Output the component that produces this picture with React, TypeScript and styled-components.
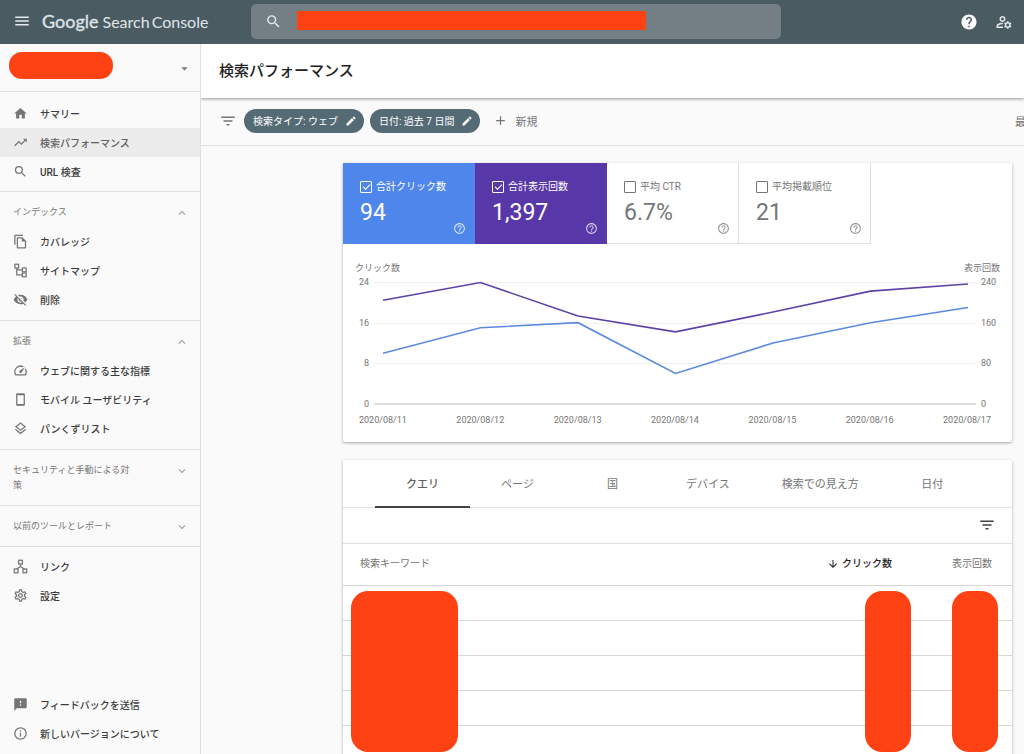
import React from 'react';
import styled, { createGlobalStyle, css } from 'styled-components';
import {
  MdAdd,
  MdArrowDownward,
  MdArrowDropDown,
  MdEdit,
  MdExpandLess,
  MdExpandMore,
  MdFeedback,
  MdFilterList,
  MdHelp,
  MdHelpOutline,
  MdHome,
  MdMenu,
  MdOutlineFileCopy,
  MdOutlineInfo,
  MdOutlineLayers,
  MdOutlineManageAccounts,
  MdOutlineSettings,
  MdOutlineSpeed,
  MdSearch,
  MdTrendingUp,
  MdVisibilityOff,
} from 'react-icons/md';

const color = {
  header: '#4b5b62',
  search: '#737f85',
  chip: '#546b76',
  page: '#fafafa',
  line: '#e0e0e0',
  text: '#212121',
  nav: '#3c3c3c',
  muted: '#757575',
  redact: '#ff4213',
  clicks: '#4f86ec',
  impressions: '#5838a8',
};

const GlobalStyle = createGlobalStyle`
  *, *::before, *::after { box-sizing: border-box; }
  body {
    margin: 0;
    background: ${color.page};
    color: ${color.text};
    font-family: Roboto, "Noto Sans CJK JP", sans-serif;
    font-size: 10px;
  }
  button, input { font: inherit; color: inherit; }
  button { border: 0; padding: 0; background: none; cursor: pointer; }
  a { color: inherit; text-decoration: none; }
  svg { display: block; flex: none; }
`;

const Shell = styled.div`
  display: flex;
  flex-direction: column;
  height: 100vh;
  overflow: hidden;
`;

/* ---------- header ---------- */

const Header = styled.header`
  display: flex;
  align-items: center;
  flex: none;
  height: 44px;
  padding-right: 11px;
  background: ${color.header};
  color: #e4e9eb;
`;

const Brand = styled.div`
  display: flex;
  align-items: center;
  flex: none;
  gap: 11px;
  width: 251px;
  padding: 0 0 2px 13px;
`;

const Logo = styled.a`
  display: flex;
  align-items: baseline;
  gap: 4px;
  font-family: Lato, sans-serif;
  font-size: 16px;
  line-height: 24px;
  color: #dfe5e8;
`;

const LogoName = styled.span`
  font-size: 18px;
  -webkit-text-stroke: 0.3px currentColor;
`;

const LogoProduct = styled.span`
  display: flex;
  gap: 2px;
`;

const SearchBox = styled.label`
  position: relative;
  display: flex;
  align-items: center;
  flex: 0 1 530px;
  gap: 15px;
  height: 35px;
  margin-bottom: 2px;
  padding: 0 14px;
  border-radius: 5px;
  background: ${color.search};
`;

const SearchInput = styled.input`
  flex: 1;
  min-width: 0;
  height: 24px;
  border: 0;
  outline: 0;
  background: transparent;
  font-size: 12px;
`;

const SearchCover = styled.span`
  position: absolute;
  top: 7px;
  left: 46px;
  width: 349px;
  height: 19px;
  background: ${color.redact};
`;

const HeaderActions = styled.div`
  display: flex;
  align-items: center;
  gap: 17px;
  margin-left: auto;
  padding-bottom: 1px;
`;

/* ---------- sidebar ---------- */

const Body = styled.div`
  display: flex;
  flex: 1;
  min-height: 0;
`;

const Sidebar = styled.nav`
  display: flex;
  flex-direction: column;
  flex: none;
  width: 201px;
  border-right: 1px solid ${color.line};
`;

const PropertyPicker = styled.button`
  display: flex;
  align-items: center;
  justify-content: space-between;
  flex: none;
  height: 48px;
  padding: 0 8px 4px 9px;
  border-bottom: 1px solid ${color.line};
  color: ${color.muted};

  svg { margin-top: 5px; }
`;

const PropertyCover = styled.span`
  width: 104px;
  height: 27px;
  border-radius: 13px;
  background: ${color.redact};
`;

const Section = styled.section<{ $last?: boolean; $open?: boolean }>`
  padding: 5px 0 ${(p) => (p.$open ? 6 : 5)}px;
  border-bottom: ${(p) => (p.$last ? 0 : 1)}px solid ${color.line};
`;

const SectionHead = styled.button`
  display: flex;
  align-items: flex-start;
  justify-content: space-between;
  width: 100%;
  padding: 8px 11px 7px 13px;
  color: ${color.muted};
  font-size: 9px;
  line-height: 15px;
  text-align: left;

  svg { color: #9e9e9e; margin-top: 1px; }
`;

const SectionTitle = styled.span`
  width: 124px;
`;

const NavList = styled.ul<{ $top?: number }>`
  margin: 0;
  padding: ${(p) => p.$top ?? 0}px 0 0;
  list-style: none;
`;

const NavLink = styled.a<{ $active?: boolean }>`
  display: flex;
  align-items: center;
  gap: 12px;
  height: 29px;
  padding-left: 13px;
  color: ${(p) => (p.$active ? '#616161' : color.nav)};
  font-weight: 500;
  background: ${(p) => (p.$active ? '#ececec' : 'transparent')};

  svg { color: ${color.muted}; }
`;

const SidebarFoot = styled.div`
  margin-top: auto;
  padding-bottom: 6px;
`;

/* ---------- main ---------- */

const Main = styled.main`
  display: flex;
  flex-direction: column;
  flex: 1;
  min-width: 0;
  overflow: hidden;
`;

const TitleBar = styled.div`
  position: relative;
  display: flex;
  align-items: center;
  flex: none;
  height: 54px;
  padding-left: 18px;
  background: #fff;
  box-shadow: 0 1px 3px rgba(0, 0, 0, 0.4);
`;

const Title = styled.h1`
  margin: 0;
  font-size: 15px;
  line-height: 24px;
  font-weight: 500;
`;

const FilterBar = styled.div`
  display: flex;
  align-items: center;
  flex: none;
  gap: 6px;
  height: 48px;
  padding: 0 0 2px 17px;
  border-bottom: 1px solid ${color.line};
  overflow: hidden;
  color: ${color.muted};
`;

const IconButton = styled.button`
  display: flex;
  align-items: center;
  justify-content: center;
`;

const FilterToggle = styled(IconButton)`
  width: 20px;
`;

const Chip = styled.button`
  display: flex;
  align-items: center;
  justify-content: space-between;
  gap: 7px;
  height: 24px;
  padding: 0 7px 0 9px;
  border-radius: 12px;
  background: ${color.chip};
  color: #fff;
  white-space: nowrap;
`;

const NewFilter = styled.button`
  display: flex;
  align-items: center;
  gap: 7px;
  margin-left: 7px;
  font-size: 11px;
  white-space: nowrap;
`;

const Updated = styled.span`
  margin: 0 -2px 0 auto;
  font-size: 11px;
  white-space: nowrap;
`;

const Content = styled.div`
  flex: 1;
  min-height: 0;
  padding: 17px 12px 0 142px;
  overflow-y: auto;
  scrollbar-width: none;
`;

const Card = styled.section`
  margin-bottom: 18px;
  border-radius: 2px;
  background: #fff;
  box-shadow: 0 1px 3px rgba(0, 0, 0, 0.35);
`;

const Tiles = styled.div`
  display: flex;
`;

const Tile = styled.div<{ $fill?: string }>`
  width: 132px;
  height: 81px;
  padding: 16px 8px 0 17px;
  border: solid ${color.line};
  border-width: 0 1px 1px 0;
  color: ${color.muted};
  ${(p) =>
    p.$fill &&
    css`
      border-color: ${p.$fill};
      background: ${p.$fill};
      color: #fff;
    `}
`;

const TileLabel = styled.label`
  display: flex;
  align-items: center;
  gap: 4px;
  line-height: 16px;
  white-space: nowrap;
`;

const Check = styled.input`
  display: grid;
  place-items: center;
  appearance: none;
  width: 12px;
  height: 12px;
  margin: 0;
  border: 1px solid currentColor;
  border-radius: 1px;

  &:checked::after {
    content: '';
    width: 7px;
    height: 4px;
    margin-bottom: 2px;
    border: solid currentColor;
    border-width: 0 0 1px 1px;
    transform: rotate(-45deg);
  }
`;

const TileFoot = styled.div`
  display: flex;
  justify-content: space-between;
  height: 40px;
  padding-top: 5px;
`;

const TileValue = styled.span`
  font-size: 23px;
  line-height: 26px;
`;

const TileHelp = styled(IconButton)`
  align-self: flex-end;
  opacity: 0.75;
`;

/* ---------- chart ---------- */

const Chart = styled.figure`
  margin: 0;
  padding: 18px 12px 16px;
  color: ${color.muted};
  font-size: 9px;
  line-height: 12px;
`;

const AxisTitles = styled.div`
  display: flex;
  justify-content: space-between;
  margin-bottom: 2px;
`;

const PlotRow = styled.div`
  display: flex;
  gap: 5px;
`;

const Scale = styled.div<{ $align: 'left' | 'right' }>`
  display: flex;
  flex-direction: column;
  justify-content: space-between;
  width: ${(p) => (p.$align === 'right' ? 14 : 19)}px;
  height: 134px;
  text-align: ${(p) => p.$align};
`;

const Plot = styled.svg`
  flex: 1;
  min-width: 0;
  height: 122px;
  margin: 6px 0;
  overflow: visible;

  line, polyline { vector-effect: non-scaling-stroke; fill: none; }
`;

const Dates = styled.div`
  display: flex;
  justify-content: space-between;
  margin-top: 4px;
  padding: 0 9px 0 4px;
`;

/* ---------- table card ---------- */

const Tabs = styled.div`
  display: flex;
  height: 48px;
  padding-left: 32px;
  border-bottom: 1px solid ${color.line};
`;

const Tab = styled.button<{ $active?: boolean }>`
  min-width: 95px;
  height: 48px;
  padding: 0 26px;
  border-bottom: 2px solid ${(p) => (p.$active ? '#424242' : 'transparent')};
  color: ${(p) => (p.$active ? '#616161' : color.muted)};
  font-size: 11px;
  font-weight: ${(p) => (p.$active ? 500 : 400)};
  white-space: nowrap;
`;

const TableTools = styled.div`
  display: flex;
  align-items: center;
  justify-content: flex-end;
  height: 36px;
  padding: 0 16px 2px 0;
  border-bottom: 1px solid ${color.line};
  color: #424242;
`;

const TableWrap = styled.div`
  position: relative;
`;

const Table = styled.table`
  width: 100%;
  border-collapse: separate;
  border-spacing: 0;
  table-layout: fixed;
`;

const HeadCell = styled.th<{ $width?: number; $end?: boolean; $sorted?: boolean }>`
  width: ${(p) => (p.$width ? `${p.$width}px` : 'auto')};
  height: 42px;
  padding: 0 ${(p) => (p.$end ? 20 : 0)}px 2px ${(p) => (p.$end ? 0 : 17)}px;
  border-bottom: 1px solid #d6d6d6;
  color: ${(p) => (p.$sorted ? color.text : color.muted)};
  font-weight: ${(p) => (p.$sorted ? 500 : 400)};
  line-height: 14px;
  text-align: ${(p) => (p.$end ? 'right' : 'left')};
  white-space: nowrap;
`;

const SortButton = styled.button`
  display: flex;
  align-items: center;
  gap: 3px;
  margin-left: auto;
  font-weight: 500;
`;

const Cell = styled.td`
  height: 35px;
  padding: 0;
  border-bottom: 1px solid #d6d6d6;
`;

const Cover = styled.span<{ $left?: number; $right?: number; $width: number }>`
  position: absolute;
  top: 47px;
  ${(p) => (p.$left !== undefined ? `left: ${p.$left}px;` : `right: ${p.$right}px;`)}
  width: ${(p) => p.$width}px;
  height: 161px;
  border-radius: 17px;
  background: ${color.redact};
`;

/* ---------- drawn icons ---------- */

const Stroke = styled.svg.attrs({ viewBox: '0 0 24 24', width: 15, height: 15 })`
  fill: none;
  stroke: currentColor;
  stroke-width: 2;
`;

const SitemapIcon = () => (
  <Stroke>
    <rect x="3" y="2" width="6" height="6" />
    <rect x="15" y="8" width="6" height="6" />
    <rect x="15" y="16" width="6" height="6" />
    <path d="M6 8v11h9M6 11h9" />
  </Stroke>
);

const PhoneIcon = () => (
  <Stroke>
    <rect x="6" y="3" width="12" height="18" rx="1" />
    <path d="M6 4h12M6 20h12" />
  </Stroke>
);

const LinksIcon = () => (
  <Stroke>
    <rect x="9" y="2" width="6" height="6" />
    <rect x="2" y="16" width="6" height="6" />
    <rect x="16" y="16" width="6" height="6" />
    <path d="M12 8v5M12 12l-6 4M12 12l6 4" />
  </Stroke>
);

/* ---------- data ---------- */

const dates = ['11', '12', '13', '14', '15', '16', '17'].map((d) => `2020/08/${d}`);
const clicks = [10, 15, 16, 6, 12, 16, 19];
const impressions = [204, 239, 173, 142, 181, 222, 236];

const points = (values: number[], max: number) =>
  values.map((v, i) => `${9 + (i * 585) / 6},${122 - (v / max) * 122}`).join(' ');

type Item = { label: string; icon: React.ReactNode; active?: boolean };

const topItems: Item[] = [
  { label: 'サマリー', icon: <MdHome size={15} /> },
  { label: '検索パフォーマンス', icon: <MdTrendingUp size={15} />, active: true },
  { label: 'URL 検査', icon: <MdSearch size={15} /> },
];
const indexItems: Item[] = [
  { label: 'カバレッジ', icon: <MdOutlineFileCopy size={15} /> },
  { label: 'サイトマップ', icon: <SitemapIcon /> },
  { label: '削除', icon: <MdVisibilityOff size={15} /> },
];
const enhanceItems: Item[] = [
  { label: 'ウェブに関する主な指標', icon: <MdOutlineSpeed size={15} /> },
  { label: 'モバイル ユーザビリティ', icon: <PhoneIcon /> },
  { label: 'パンくずリスト', icon: <MdOutlineLayers size={15} /> },
];
const lowerItems: Item[] = [
  { label: 'リンク', icon: <LinksIcon /> },
  { label: '設定', icon: <MdOutlineSettings size={15} /> },
];
const footItems: Item[] = [
  { label: 'フィードバックを送信', icon: <MdFeedback size={15} /> },
  { label: '新しいバージョンについて', icon: <MdOutlineInfo size={15} /> },
];

const tiles = [
  { label: '合計クリック数', value: '94', fill: color.clicks },
  { label: '合計表示回数', value: '1,397', fill: color.impressions },
  { label: '平均 CTR', value: '6.7%' },
  { label: '平均掲載順位', value: '21' },
];

const tabs = ['クエリ', 'ページ', '国', 'デバイス', '検索での見え方', '日付'];

const Nav = ({ items, top }: { items: Item[]; top?: number }) => (
  <NavList $top={top}>
    {items.map((item) => (
      <li key={item.label}>
        <NavLink href="#" $active={item.active} aria-current={item.active ? 'page' : undefined}>
          {item.icon}
          {item.label}
        </NavLink>
      </li>
    ))}
  </NavList>
);

const NavSection = ({ title, items }: { title: string; items?: Item[] }) => (
  <Section $open={!!items}>
    <SectionHead aria-expanded={!!items}>
      <SectionTitle>{title}</SectionTitle>
      {items ? <MdExpandLess size={14} /> : <MdExpandMore size={14} />}
    </SectionHead>
    {items && <Nav items={items} />}
  </Section>
);

export default function App() {
  return (
    <Shell>
      <GlobalStyle />
      <Header>
        <Brand>
          <IconButton aria-label="メニュー">
            <MdMenu size={18} />
          </IconButton>
          <Logo href="#">
            <LogoName>Google</LogoName>
            <LogoProduct>
              <span>Search</span>
              <span>Console</span>
            </LogoProduct>
          </Logo>
        </Brand>
        <SearchBox>
          <MdSearch size={17} />
          <SearchInput type="search" aria-label="URL を検査" />
          <SearchCover />
        </SearchBox>
        <HeaderActions>
          <IconButton aria-label="ヘルプ">
            <MdHelp size={18} color="#fff" />
          </IconButton>
          <IconButton aria-label="ユーザー設定">
            <MdOutlineManageAccounts size={18} />
          </IconButton>
        </HeaderActions>
      </Header>

      <Body>
        <Sidebar>
          <PropertyPicker aria-label="プロパティを選択">
            <PropertyCover />
            <MdArrowDropDown size={15} />
          </PropertyPicker>
          <Section>
            <Nav items={topItems} top={2} />
          </Section>
          <NavSection title="インデックス" items={indexItems} />
          <NavSection title="拡張" items={enhanceItems} />
          <NavSection title="セキュリティと手動による対策" />
          <NavSection title="以前のツールとレポート" />
          <Section $last>
            <Nav items={lowerItems} />
          </Section>
          <SidebarFoot>
            <Nav items={footItems} />
          </SidebarFoot>
        </Sidebar>

        <Main>
          <TitleBar>
            <Title>検索パフォーマンス</Title>
          </TitleBar>
          <FilterBar>
            <FilterToggle aria-label="フィルタ">
              <MdFilterList size={18} />
            </FilterToggle>
            <Chip>
              検索タイプ: ウェブ
              <MdEdit size={12} />
            </Chip>
            <Chip>
              日付: 過去 7 日間
              <MdEdit size={12} />
            </Chip>
            <NewFilter>
              <MdAdd size={15} />
              新規
            </NewFilter>
            <Updated>最</Updated>
          </FilterBar>

          <Content>
            <Card>
              <Tiles>
                {tiles.map((t) => (
                  <Tile key={t.label} $fill={t.fill}>
                    <TileLabel>
                      <Check type="checkbox" defaultChecked={!!t.fill} />
                      {t.label}
                    </TileLabel>
                    <TileFoot>
                      <TileValue>{t.value}</TileValue>
                      <TileHelp aria-label={`${t.label}のヘルプ`}>
                        <MdHelpOutline size={13} />
                      </TileHelp>
                    </TileFoot>
                  </Tile>
                ))}
              </Tiles>
              <Chart>
                <AxisTitles>
                  <span>クリック数</span>
                  <span>表示回数</span>
                </AxisTitles>
                <PlotRow>
                  <Scale $align="right">
                    {[24, 16, 8, 0].map((n) => (
                      <span key={n}>{n}</span>
                    ))}
                  </Scale>
                  <Plot viewBox="0 0 602 122" preserveAspectRatio="none">
                    <g stroke="#efefef" shapeRendering="crispEdges">
                      <line x1="0" x2="602" y1="0" y2="0" />
                      <line x1="0" x2="602" y1="41" y2="41" />
                      <line x1="0" x2="602" y1="81" y2="81" />
                    </g>
                    <line x1="0" x2="602" y1="122" y2="122" stroke="#bdbdbd" />
                    <polyline points={points(clicks, 24)} stroke="#5c8ae0" strokeWidth="1.6" />
                    <polyline points={points(impressions, 240)} stroke="#5e42a6" strokeWidth="1.6" />
                  </Plot>
                  <Scale $align="left">
                    {[240, 160, 80, 0].map((n) => (
                      <span key={n}>{n}</span>
                    ))}
                  </Scale>
                </PlotRow>
                <Dates>
                  {dates.map((d) => (
                    <span key={d}>{d}</span>
                  ))}
                </Dates>
              </Chart>
            </Card>

            <Card>
              <Tabs role="tablist">
                {tabs.map((t, i) => (
                  <Tab key={t} role="tab" aria-selected={i === 0} $active={i === 0}>
                    {t}
                  </Tab>
                ))}
              </Tabs>
              <TableTools>
                <IconButton aria-label="行をフィルタ">
                  <MdFilterList size={18} />
                </IconButton>
              </TableTools>
              <TableWrap>
                <Table>
                  <thead>
                    <tr>
                      <HeadCell>検索キーワード</HeadCell>
                      <HeadCell $width={100} $end $sorted aria-sort="descending">
                        <SortButton>
                          <MdArrowDownward size={12} />
                          クリック数
                        </SortButton>
                      </HeadCell>
                      <HeadCell $width={100} $end>
                        表示回数
                      </HeadCell>
                    </tr>
                  </thead>
                  <tbody>
                    {[0, 1, 2, 3, 4, 5].map((row) => (
                      <tr key={row}>
                        <Cell />
                        <Cell />
                        <Cell />
                      </tr>
                    ))}
                  </tbody>
                </Table>
                <Cover $left={8} $width={107} />
                <Cover $right={101} $width={46} />
                <Cover $right={14} $width={46} />
              </TableWrap>
            </Card>
          </Content>
        </Main>
      </Body>
    </Shell>
  );
}
